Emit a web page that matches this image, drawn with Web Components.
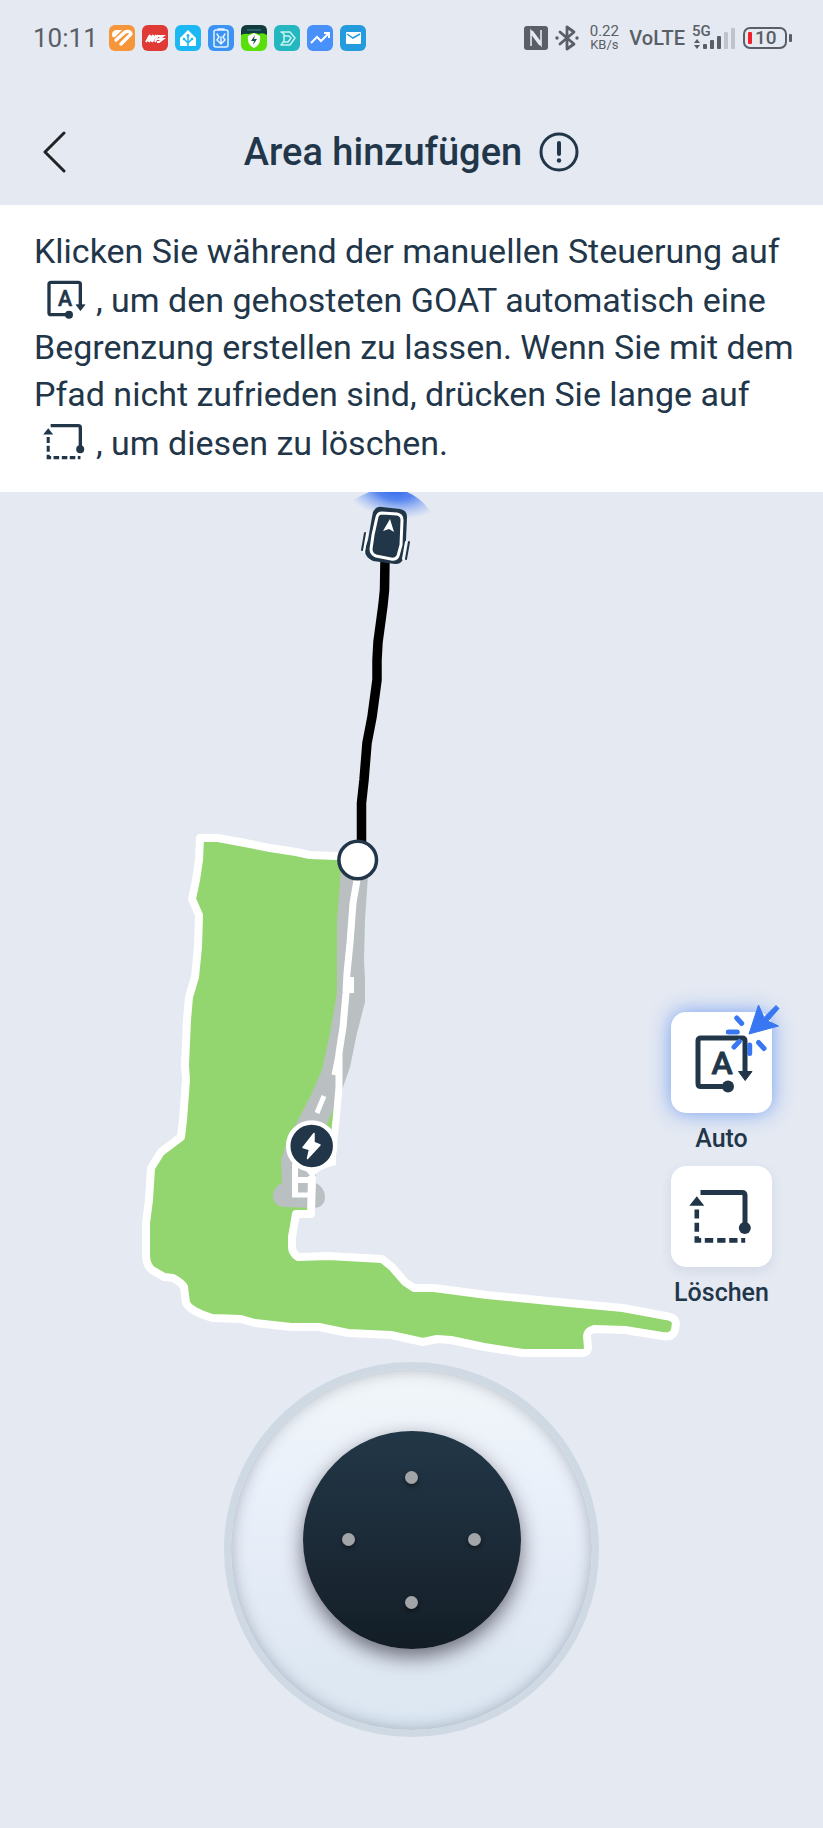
<!DOCTYPE html>
<html lang="de">
<head>
<meta charset="utf-8">
<meta name="viewport" content="width=device-width, initial-scale=1">
<title>Area hinzufügen</title>
<style>
    body {
        margin: 0;
        min-height: 100vh;
        background: #e4e9f2;
        color: #22364a;
        font-family: Roboto, "Noto Sans", sans-serif;
        --ink: #22364a;
        --status: #5a5e66;
        --accent: #3977f2;
    }
</style>
</head>
<body>
<goat-screen>
    <status-bar slot="status" time="10:11"></status-bar>
    <page-header slot="header">Area hinzufügen</page-header>
    <hint-panel slot="hint">Klicken Sie während der manuellen Steuerung auf <tool-icon name="auto"></tool-icon>, um den gehosteten GOAT automatisch eine Begrenzung erstellen zu lassen. Wenn Sie mit dem Pfad nicht zufrieden sind, drücken Sie lange auf <tool-icon name="erase"></tool-icon>, um diesen zu löschen.</hint-panel>
    <area-map slot="map">
        <tool-button icon="auto" active>Auto</tool-button>
        <tool-button icon="erase">Löschen</tool-button>
    </area-map>
    <joy-stick slot="control"></joy-stick>
</goat-screen>

<script>
class GoatScreen extends HTMLElement {
    constructor() {
        super();
        this.attachShadow({ mode: 'open' });
    }

    connectedCallback() {
        this.shadowRoot.innerHTML = `
            <style>
                :host {
                    display: flex;
                    flex-direction: column;
                }
                main {
                    display: flex;
                    flex-direction: column;
                }
            </style>
            <slot name="status"></slot>
            <slot name="header"></slot>
            <main>
                <slot name="hint"></slot>
                <slot name="map"></slot>
                <slot name="control"></slot>
            </main>
        `;
    }
}

// Notification icons, each drawn on a 26 x 26 tile
const APP_ICONS = [
    `<rect width="26" height="26" rx="6" fill="#f7953a"/>
     <path d="M3 10q0-5 5-5h5l-7 7q-3 1-3-2z" fill="#fff"/>
     <path d="M7 15l9-8M12 19l9-9M16 7q5-2 6 2" fill="none" stroke="#fff" stroke-width="3.400" stroke-linecap="round"/>`,
    `<rect width="26" height="26" rx="6" fill="#e03a36"/>
     <path d="M4 17l4-7-1 7 4-7-1 7 4-7M13 17l3-7M16 11h5l-4 3h4l-4 3h-2" fill="none" stroke="#fff" stroke-width="2"/>`,
    `<rect width="26" height="26" rx="6" fill="#1cb8f3"/>
     <path d="M13 5l8 8v7q0 1-1 1H6q-1 0-1-1v-7z" fill="#fff"/>
     <path d="M13 21V11M13 18l-4-4M13 18l4-4" stroke="#1cb8f3" stroke-width="1.500"/>
     <g fill="#1cb8f3"><circle cx="13" cy="10.500" r="1.500"/><circle cx="9" cy="14" r="1.300"/><circle cx="17" cy="14" r="1.300"/></g>`,
    `<rect width="26" height="26" rx="6" fill="#3b93f3"/>
     <g fill="none" stroke="#e8f4ff" stroke-width="1.500" stroke-linecap="round">
        <path d="M8 5h10q2 0 2 2v13q0 2-2 2H8q-2 0-2-2V7q0-2 2-2zM10 4h6"/>
        <path d="M13 12v6M9 9l2 3-2 3 4 4 4-4-2-3 2-3"/>
     </g>`,
    `<rect width="26" height="26" rx="6" fill="#59e00c"/>
     <path d="M0 10V6q0-6 6-6h14q6 0 6 6v4q-4-3-8-1-6-2-10 0-4-1-8 1z" fill="#113b3e"/>
     <path d="M6 5h14" stroke="#286365" stroke-width="2"/>
     <path d="M13 8l6 3q1 9-6 12-7-3-6-12z" fill="#fff"/>
     <path d="M14 10l-4 6h3l-1 4 4-6h-3z" fill="#155044"/>`,
    `<rect width="26" height="26" rx="6" fill="#25b7bf"/>
     <g fill="none" stroke="#c9f3f2" stroke-width="1.500" stroke-linejoin="round">
        <path d="M7 7h9l5 6-5 7H7l3-4V9z"/><path d="M10 11h5l2 2-3 4h-4"/>
     </g>`,
    `<rect width="26" height="26" rx="6" fill="#4890fa"/>
     <path d="M4 18l6-6 4 4 7-7M17 8h5v5" fill="none" stroke="#fff" stroke-width="2"/>`,
    `<rect width="26" height="26" rx="6" fill="#249bdc"/>
     <rect x="6" y="7" width="15" height="12" rx="1" fill="#fff"/>
     <path d="M7 9l6 4 7-4" fill="none" stroke="#249bdc" stroke-width="1.500"/>`
];

class StatusBar extends HTMLElement {
    constructor() {
        super();
        this.attachShadow({ mode: 'open' });
    }

    connectedCallback() {
        const apps = APP_ICONS
            .map(icon => `<svg width="26" height="26" viewBox="0 0 26 26" aria-hidden="true">${icon}</svg>`)
            .join('');

        this.shadowRoot.innerHTML = `
            <style>
                :host {
                    display: flex;
                    justify-content: space-between;
                    align-items: center;
                    height: 76px;
                    padding: 0 31px 0 33px;
                    color: var(--status);
                }
                svg {
                    display: block;
                    flex: none;
                }
                .group {
                    display: flex;
                    align-items: center;
                    gap: 7px;
                }
                time {
                    font-size: 26px;
                    line-height: 32px;
                    margin-right: 4px;
                }
                .speed {
                    width: 36px;
                    text-align: center;
                    font-size: 15px;
                    line-height: 13px;
                }
                .speed small {
                    display: block;
                    font-size: 13px;
                }
                .volte {
                    font-size: 20px;
                    font-weight: 500;
                    line-height: 24px;
                }
                .signal {
                    display: grid;
                    width: 44px;
                    height: 26px;
                }
                .signal > * {
                    grid-area: 1 / 1;
                }
                .signal span {
                    font-size: 15px;
                    font-weight: 500;
                    line-height: 12px;
                }
                .battery {
                    display: grid;
                    align-items: center;
                    width: 49px;
                }
                .battery > * {
                    grid-area: 1 / 1;
                }
                .battery span {
                    padding-left: 12px;
                    font-size: 19px;
                    font-weight: 500;
                    line-height: 24px;
                }
            </style>
            <div class="group">
                <time>${this.getAttribute('time')}</time>
                ${apps}
            </div>
            <div class="group">
                <svg width="24" height="24" viewBox="0 0 24 24" aria-hidden="true">
                    <rect width="24" height="24" rx="3" fill="#5a5e66"/>
                    <path d="M7 20V5l10 14V4M7 7l9 12M8 5l9 12" fill="none" stroke="#e4e9f2" stroke-width="1.600"/>
                </svg>
                <svg width="24" height="26" viewBox="0 0 24 26" aria-hidden="true">
                    <path d="M5 7l14 12-7 5V2l7 5L5 19" fill="none" stroke="#5a5e66" stroke-width="2.800" stroke-linejoin="round" stroke-linecap="round"/>
                    <g fill="#5a5e66"><circle cx="2" cy="13" r="1.700"/><circle cx="22" cy="13" r="1.700"/></g>
                </svg>
                <div class="speed">0.22<small>KB/s</small></div>
                <span class="volte">VoLTE</span>
                <div class="signal">
                    <span>5G</span>
                    <svg width="44" height="26" viewBox="0 0 44 26" aria-hidden="true">
                        <g fill="#5a5e66">
                            <path d="M2 18l3-4 3 4zM2 20l3 4 3-4z"/>
                            <rect x="11" y="19" width="4" height="5" rx="1"/>
                            <rect x="18" y="15" width="4" height="9" rx="1"/>
                            <rect x="25" y="11" width="4" height="13" rx="1"/>
                        </g>
                        <g fill="#bfc3cc">
                            <rect x="32" y="7" width="4" height="17" rx="1"/>
                            <rect x="39" y="3" width="4" height="21" rx="1"/>
                        </g>
                    </svg>
                </div>
                <div class="battery">
                    <svg width="49" height="24" viewBox="0 0 49 24" aria-hidden="true">
                        <rect x="1" y="2" width="42" height="20" rx="6" fill="none" stroke="#5a5e66" stroke-width="2"/>
                        <rect x="5" y="6" width="4" height="12" rx="1" fill="#f2202a"/>
                        <rect x="46" y="8" width="3" height="8" rx="1" fill="#5a5e66"/>
                    </svg>
                    <span>10</span>
                </div>
            </div>
        `;
    }
}

class PageHeader extends HTMLElement {
    constructor() {
        super();
        this.attachShadow({ mode: 'open' });
    }

    connectedCallback() {
        this.shadowRoot.innerHTML = `
            <style>
                :host {
                    display: grid;
                    grid-template-columns: 56px 1fr 56px;
                    align-items: center;
                    padding: 48px 27px 25px;
                }
                button {
                    display: grid;
                    place-items: center;
                    height: 56px;
                    padding: 0;
                    border: 0;
                    background: none;
                    cursor: pointer;
                }
                .title {
                    display: flex;
                    justify-content: center;
                    align-items: center;
                    gap: 17px;
                }
                h1 {
                    margin: 0;
                    font-size: 38px;
                    font-weight: 500;
                    line-height: 48px;
                }
            </style>
            <button type="button" aria-label="Zurück">
                <svg width="24" height="42" viewBox="0 0 24 42">
                    <path d="M21 2L2 21l19 19" fill="none" stroke="#222326" stroke-width="3" stroke-linecap="round" stroke-linejoin="round"/>
                </svg>
            </button>
            <div class="title">
                <h1><slot></slot></h1>
                <button type="button" aria-label="Info">
                    <svg width="40" height="40" viewBox="0 0 40 40">
                        <circle cx="20" cy="20" r="18" fill="none" stroke="#22364a" stroke-width="3"/>
                        <path d="M20 11v11" stroke="#22364a" stroke-width="4" stroke-linecap="round"/>
                        <circle cx="20" cy="28.500" r="2.200" fill="#22364a"/>
                    </svg>
                </button>
            </div>
        `;
    }
}

class HintPanel extends HTMLElement {
    constructor() {
        super();
        this.attachShadow({ mode: 'open' });
    }

    connectedCallback() {
        this.shadowRoot.innerHTML = `
            <style>
                :host {
                    display: block;
                    padding: 23px 24px 25px 34px;
                    background: #fff;
                }
                p {
                    margin: 0;
                    font-size: 34px;
                    line-height: 47px;
                }
                ::slotted(tool-icon) {
                    width: 48px;
                    height: 48px;
                    margin: 0 7px;
                    vertical-align: -11px;
                }
            </style>
            <p><slot></slot></p>
        `;
    }
}

// Tool glyphs on a 72 x 72 grid
const TOOL_ICONS = {
    auto: `
        <path d="M42 59.500H15q-3 0-3-3V14q0-3 3-3h41q3 0 3 3v32" fill="none" stroke="currentColor" stroke-width="5"/>
        <path d="M52.500 44.500h13.500l-6.800 9z" fill="currentColor" stroke="currentColor" stroke-linejoin="round"/>
        <circle cx="42" cy="59.500" r="6" fill="currentColor"/>
        <text x="36" y="47" font-size="32" font-weight="500" text-anchor="middle" fill="currentColor" stroke="currentColor" stroke-width="0.800" stroke-linejoin="round">A</text>`,
    erase: `
        <path d="M14.500 11.500H56q3 0 3 3V47" fill="none" stroke="currentColor" stroke-width="5"/>
        <circle cx="58.800" cy="47" r="6" fill="currentColor"/>
        <path d="M10.800 15.300l7.500 9.400h-15z" fill="currentColor"/>
        <path d="M10.800 28.400v9M10.800 41.700v9M10.800 55.300v4.100h4.400M18.800 59.400h8.400M31.200 59.400h8.300M43.200 59.400h8.300M55.200 59.400h4" fill="none" stroke="currentColor" stroke-width="4.600"/>`
};

class ToolIcon extends HTMLElement {
    constructor() {
        super();
        this.attachShadow({ mode: 'open' });
    }

    connectedCallback() {
        this.shadowRoot.innerHTML = `
            <style>
                :host {
                    display: inline-block;
                    width: 72px;
                    height: 72px;
                }
                svg {
                    display: block;
                    width: 100%;
                    height: 100%;
                }
            </style>
            <svg viewBox="0 0 72 72">${TOOL_ICONS[this.getAttribute('name')]}</svg>
        `;
    }
}

class ToolButton extends HTMLElement {
    constructor() {
        super();
        this.attachShadow({ mode: 'open' });
    }

    connectedCallback() {
        const cursor = this.hasAttribute('active') ? `
            <svg class="cursor" viewBox="0 0 101 101" aria-hidden="true">
                <path d="M78 22l9.500-29L93 5.500l12-12 3 3L97 9l10.500 5z" fill="#3977f2" stroke="#3977f2" stroke-linejoin="round"/>
                <path d="M65.700 6l5 5.500M57.300 20h9M68.300 29.500l-5.300 5.500M78.700 33v8.500M87.500 30.500l5.500 6" stroke="#3977f2" stroke-width="5" stroke-linecap="round"/>
            </svg>` : '';

        this.shadowRoot.innerHTML = `
            <style>
                :host {
                    display: block;
                }
                button {
                    display: flex;
                    flex-direction: column;
                    align-items: center;
                    gap: 10px;
                    padding: 0;
                    border: 0;
                    background: none;
                    color: var(--ink);
                    font: 500 25px/32px Roboto, "Noto Sans", sans-serif;
                    cursor: pointer;
                }
                .card {
                    position: relative;
                    display: grid;
                    place-items: center;
                    width: 101px;
                    height: 101px;
                    border-radius: 15px;
                    background: #fff;
                    box-shadow: 0 4px 12px rgba(60, 80, 120, 0.1);
                }
                :host([active]) .card {
                    box-shadow: 0 0 20px rgba(57, 119, 242, 0.65);
                }
                .cursor {
                    position: absolute;
                    inset: 0;
                    overflow: visible;
                }
            </style>
            <button type="button">
                <span class="card">
                    <tool-icon name="${this.getAttribute('icon')}"></tool-icon>
                    ${cursor}
                </span>
                <span><slot></slot></span>
            </button>
        `;
    }
}

class AreaMap extends HTMLElement {
    constructor() {
        super();
        this.attachShadow({ mode: 'open' });
    }

    connectedCallback() {
        this.shadowRoot.innerHTML = `
            <style>
                :host {
                    display: block;
                    position: relative;
                }
                svg {
                    display: block;
                    width: 100%;
                    height: auto;
                }
                .tools {
                    position: absolute;
                    right: 51px;
                    bottom: 53px;
                    display: flex;
                    flex-direction: column;
                    gap: 11px;
                }
            </style>
            <svg viewBox="0 492 823 870" aria-hidden="true">
                <defs>
                    <radialGradient id="beam" gradientUnits="userSpaceOnUse" cx="0" cy="0" r="1" gradientTransform="translate(394 488) rotate(9) scale(52 30)">
                        <stop offset="0" stop-color="#2c63ea"/>
                        <stop offset="0.400" stop-color="#4a7df0" stop-opacity="0.900"/>
                        <stop offset="1" stop-color="#7fa4f4" stop-opacity="0"/>
                    </radialGradient>
                </defs>

                <!-- mowing area -->
                <path fill="#93d66f" d="M200 838L218 838 245 843 270 848 296 852 310 855 337 856 357 862 356 882 353 903 350 943 347 973 346 993 343 1027 339 1053 339 1087 337 1110 335 1127 334 1150 311 1160 311 1214 296 1214 292 1237 292 1252 296 1258 328 1256 382 1259 392 1267 405 1282 414 1288 434 1288 487 1295 569 1303 623 1308 666 1316 673 1317 676 1323 673 1336 662 1336 625 1330 594 1329 587 1333 588 1353 523 1353 484 1347 451 1340 437 1339 423 1342 391 1335 348 1333 319 1327 291 1327 255 1323 241 1319 212 1318 194 1311 186 1303 184 1287 173 1278 164 1277 149 1267 146 1255 146 1223 149 1200 151 1168 161 1152 181 1137 183 1120 186 1080 185 1065 187 1020 189 997 195 977 198 947 199 915 192 899 196 880 199 860z"/>

                <!-- transit corridor -->
                <path fill="#babfc2" d="M341 870L337 920 337 993 330 1033 322 1070 312 1093 298 1120 286 1145 281 1160 282 1183Q273 1187 273 1196 274 1207 285 1207L313 1208Q325 1208 325 1196 324 1187 316 1183L316 1150 330 1117 343 1087 350 1067 357 1033 365 1002 365 980 364 960 365 920 368 875z"/>

                <!-- boundary -->
                <g fill="none" stroke="#fff" stroke-width="7" stroke-linecap="round" stroke-linejoin="round">
                    <path d="M337 856L310 855 296 852 270 848 245 843 218 838 200 838 199 860 196 880 192 899 199 915 198 947 195 977 189 997 187 1020 185 1065 186 1080 183 1120 181 1137 161 1152 151 1168 149 1200 146 1223 146 1255 Q146 1265 152 1270L164 1277 173 1278Q182 1283 184 1287L186 1303Q190 1311 212 1318L241 1319 255 1323 291 1327 319 1327 348 1333 391 1335 423 1342 437 1339 451 1340 484 1347 523 1353 583 1353Q588 1352 588 1348L587 1336Q587 1331 594 1329L625 1330 662 1336Q673 1338 675 1330L676 1323Q675 1317 666 1316L623 1308 569 1303 487 1295 434 1288 414 1288 405 1282 392 1267 382 1259 328 1256 298 1257Q292 1253 292 1247L292 1237 296 1214 311 1214 312 1178" stroke-width="8"/>
                    <path d="M357 880L353 903 350 943 347 973 346 993 343 1027 339 1053 339 1087 337 1110 335 1130 332 1158"/>
                    <path d="M350 977v16" stroke-width="8" stroke-linecap="butt"/>
                    <path d="M338 1055l-4 20M324 1096l-7 17" stroke-width="5" stroke-linecap="butt"/>
                    <path d="M295 1165v28M297 1180h14" stroke-width="6"/>
                    <path d="M292 1195h19" stroke-width="5" stroke-linecap="butt"/>
                </g>
                <path d="M299 1168l12 10 11-9 14-4v-13h-30z" fill="#fff"/>
                <path d="M298 1167q8 2 12 9h-12z" fill="#babfc2"/>

                <!-- driven path -->
                <path d="M385 560L384.500 590 383 605 378 642 377 660 377 680 372 717 367 743 364 780 361.500 803 361.500 842" fill="none" stroke="#000" stroke-width="9.500" stroke-linejoin="round"/>
                <circle cx="357.700" cy="860" r="18.800" fill="#fff" stroke="#22364a" stroke-width="3.500"/>

                <!-- charging station -->
                <circle cx="311.700" cy="1146" r="23.500" fill="#22364a" stroke="#fff" stroke-width="4.500"/>
                <path d="M314 1133.500L303 1147.500 309.500 1149.500 307.500 1158.500 320 1145 314 1142.500z" fill="#fff" stroke="#fff" stroke-width="1.500" stroke-linejoin="round"/>

                <!-- mower -->
                <path d="M351 502Q370 488 392 488 420 492 433 516L392 524z" fill="url(#beam)"/>
                <path d="M373 512Q376 506 382 507L400 509Q407 510 407 517L406 540 404 556Q402 565 395 564L373 561Q365 557 365 551 365 548 368 540L372 517z" fill="#22364a"/>
                <path d="M382 513L397 514Q402 515 402 520L401 545 398 556Q396 560 391 559L376 556Q371 554 371 549L373 535 377 517Q378 513 382 513z" fill="none" stroke="#fff" stroke-width="3"/>
                <path d="M390 519l-7 12 6-2 5 3z" fill="#fff"/>
                <g fill="none" stroke-linecap="round">
                    <path d="M367 534l-3 18M406 542l-3 17" stroke="#fff" stroke-width="2"/>
                    <path d="M365 533l-3 17M409 542l-3 17" stroke="#22364a" stroke-width="2"/>
                </g>
            </svg>
            <div class="tools"><slot></slot></div>
        `;
    }
}

class JoyStick extends HTMLElement {
    constructor() {
        super();
        this.attachShadow({ mode: 'open' });
    }

    connectedCallback() {
        this.shadowRoot.innerHTML = `
            <style>
                :host {
                    display: flex;
                    justify-content: center;
                    padding-bottom: 91px;
                }
                .base {
                    box-sizing: border-box;
                    display: flex;
                    justify-content: center;
                    align-items: flex-start;
                    width: 375px;
                    height: 375px;
                    padding-top: 62px;
                    border: 7px solid #cfd9e4;
                    border-radius: 50%;
                    background: linear-gradient(#f1f6f9, #eaf0fa 35%, #e2eaf5 65%, #dbe7f2);
                    box-shadow: inset 0 0 16px rgba(70, 80, 100, 0.4);
                }
                .knob {
                    display: grid;
                    grid-template: repeat(3, 1fr) / repeat(3, 1fr);
                    place-items: center;
                    width: 218px;
                    height: 218px;
                    padding: 15px;
                    border: 0;
                    border-radius: 50%;
                    background: linear-gradient(#223747, #1a2733 65%, #121d25);
                    box-shadow: 0 8px 20px rgba(30, 25, 40, 0.6);
                    cursor: grab;
                }
                i {
                    width: 13px;
                    height: 13px;
                    border-radius: 50%;
                    background: #a2a5a8;
                    box-shadow: 0 2px 4px rgba(0, 0, 0, 0.5);
                }
                .up { grid-area: 1 / 2; }
                .left { grid-area: 2 / 1; }
                .right { grid-area: 2 / 3; }
                .down { grid-area: 3 / 2; }
            </style>
            <div class="base">
                <button type="button" class="knob" aria-label="Steuerung">
                    <i class="up"></i>
                    <i class="left"></i>
                    <i class="right"></i>
                    <i class="down"></i>
                </button>
            </div>
        `;
    }
}

customElements.define('goat-screen', GoatScreen);
customElements.define('status-bar', StatusBar);
customElements.define('page-header', PageHeader);
customElements.define('hint-panel', HintPanel);
customElements.define('tool-icon', ToolIcon);
customElements.define('tool-button', ToolButton);
customElements.define('area-map', AreaMap);
customElements.define('joy-stick', JoyStick);
</script>
</body>
</html>
